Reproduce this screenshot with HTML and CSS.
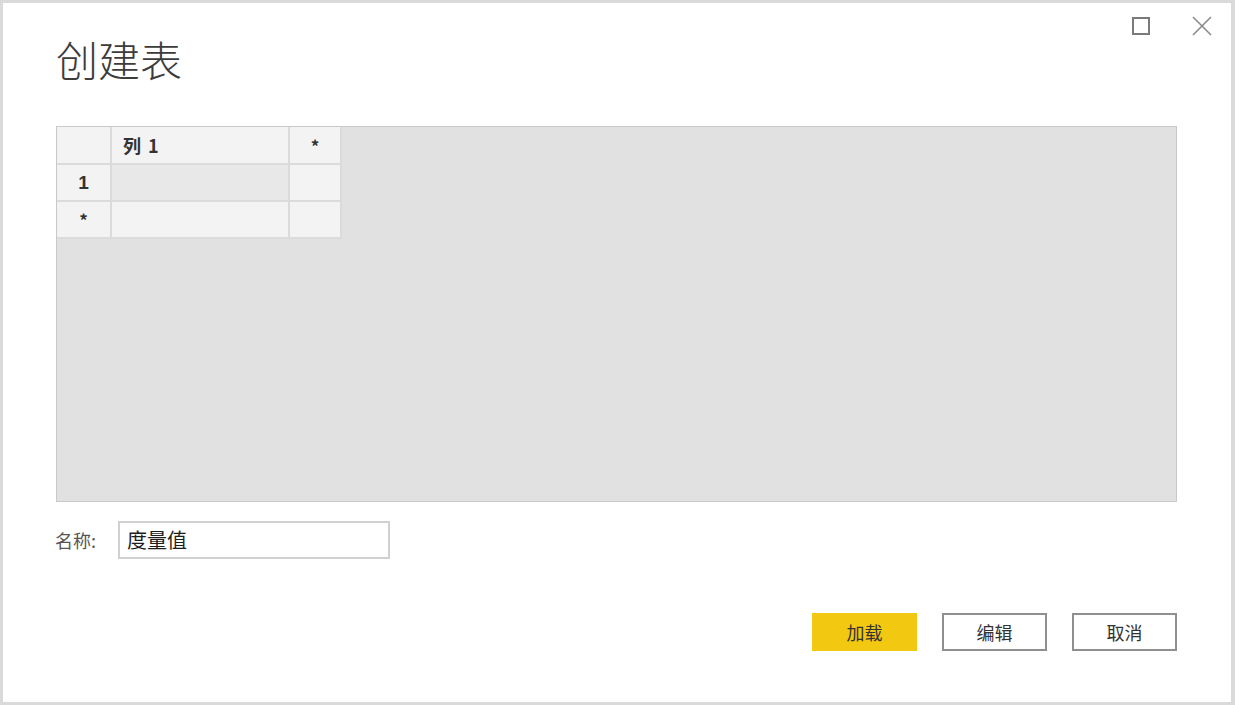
FILE: index.html
```html
<!DOCTYPE html>
<html lang="zh-CN">
<head>
<meta charset="utf-8">
<title>创建表</title>
<link rel="stylesheet" href="styles.css">
</head>
<body>
<div class="dialog">
  <div class="head">
    <h1 class="title">创建表</h1>
    <div class="controls">
      <svg class="ctl" width="18" height="18" viewBox="0 0 18 18"><rect x="1" y="1" width="16" height="16" fill="none" stroke="#7a7a7a" stroke-width="2"/></svg>
      <svg class="ctl" width="20" height="20" viewBox="0 0 20 20"><path d="M1 1 L19 19 M19 1 L1 19" fill="none" stroke="#8a8a8a" stroke-width="1.6"/></svg>
    </div>
  </div>
  <div class="sheet">
    <div class="grid">
      <div class="cell hdr"></div>
      <div class="cell hdr colname">列 1</div>
      <div class="cell hdr center">*</div>
      <div class="cell hdr center rownum">1</div>
      <div class="cell sel"></div>
      <div class="cell"></div>
      <div class="cell hdr center">*</div>
      <div class="cell"></div>
      <div class="cell"></div>
    </div>
  </div>
  <div class="name-row">
    <span class="label">名称:</span>
    <div class="input">度量值</div>
  </div>
  <div class="actions">
    <button class="btn primary">加载</button>
    <button class="btn">编辑</button>
    <button class="btn">取消</button>
  </div>
</div>
</body>
</html>
```
FILE: styles.css
```css
html, body {
  margin: 0;
  padding: 0;
  background: #ffffff;
}
body {
  font-family: "Noto Sans CJK SC", "Noto Sans", sans-serif;
}
.dialog {
  box-sizing: border-box;
  width: 1235px;
  height: 705px;
  border-style: solid;
  border-color: #dadada;
  border-width: 3px 4px 3px 3px;
  padding: 0 54px 0 53px;
  display: flex;
  flex-direction: column;
  background: #fff;
}
.head {
  display: flex;
  justify-content: space-between;
  align-items: flex-start;
}
.title {
  margin: 28px 0 0 0;
  font-size: 42px;
  line-height: 56px;
  font-weight: 300;
  color: #3c3c3c;
  letter-spacing: 0;
}
.controls {
  display: flex;
  align-items: center;
  gap: 42px;
  margin: 13px -35px 0 0;
}
.ctl {
  display: block;
}
.sheet {
  margin-top: 39px;
  height: 376px;
  box-sizing: border-box;
  border: 1px solid #c9c9c9;
  background: #e1e1e1;
}
.grid {
  display: inline-grid;
  grid-template-columns: 53px 176px 50px;
  grid-template-rows: 36px 35px 35px;
  gap: 2px;
  padding: 0 2px 2px 0;
  background: #dbdbdb;
}
.cell {
  background: #f3f3f3;
  font-size: 17px;
  font-weight: 700;
  color: #333;
  display: flex;
  align-items: center;
}
.cell.sel {
  background: #e8e8e8;
}
.colname {
  padding-left: 11px;
  font-size: 18px;
  word-spacing: 3px;
}
.center {
  justify-content: center;
}
.rownum {
  font-family: "Liberation Sans", "Noto Sans", sans-serif;
  font-size: 19px;
}
.name-row {
  margin-top: 19px;
  display: flex;
  align-items: center;
}
.label {
  flex: 0 0 auto;
  width: 63px;
  font-size: 18px;
  color: #555;
  margin-left: -1px;
}
.input {
  box-sizing: border-box;
  width: 272px;
  height: 38px;
  border: 2px solid #d0d0d0;
  padding-left: 7px;
  font-size: 20px;
  line-height: 34px;
  color: #1e1e1e;
  font-weight: 400;
}
.actions {
  margin-top: 54px;
  display: flex;
  justify-content: flex-end;
  gap: 25px;
}
.btn {
  box-sizing: border-box;
  width: 105px;
  height: 38px;
  border: 2px solid #8f8f8f;
  background: #fff;
  font-family: "Noto Sans CJK SC", "Noto Sans", sans-serif;
  font-size: 18px;
  color: #333;
  padding: 0;
}
.btn.primary {
  background: #f2c811;
  border-color: #f2c811;
}
```
